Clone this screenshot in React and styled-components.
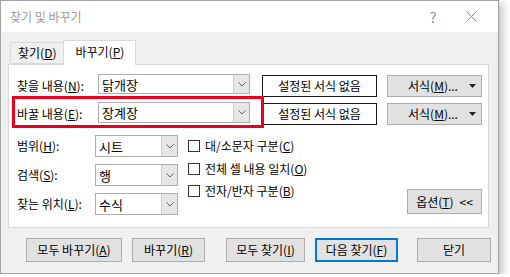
import React from "react";
import styled, { createGlobalStyle } from "styled-components";

const Global = createGlobalStyle`
  html, body { margin: 0; padding: 0; background: #ffffff; }
  body { font-family: "Noto Sans CJK KR", "Noto Sans", sans-serif; font-size: 12px; color: #000; }
  * { box-sizing: border-box; }
  u { text-decoration: underline; text-underline-offset: 1px; }
`;

const Window = styled.div`
  width: 499px;
  height: 274px;
  border: 1px solid #a3a3a3;
  box-shadow: 3px 3px 9px rgba(0, 0, 0, 0.28);
  display: flex;
  flex-direction: column;
  background: #f0f0f0;
  position: relative;
`;

const TitleBar = styled.div`
  height: 31px;
  background: #ffffff;
  display: flex;
  align-items: center;
  padding-left: 9px;
  color: #9a9a9a;
  font-size: 12px;
`;

const Title = styled.div`
  flex: 1;
  line-height: 1;
  padding-top: 1px;
`;

const TitleIcon = styled.div`
  width: ${p => p.$w}px;
  display: flex;
  align-items: center;
  justify-content: center;
  color: #8c8c8c;
  font-size: 14px;
`;

const Body = styled.div`
  flex: 1;
  padding: 8px 9px 0 7px;
  display: flex;
  flex-direction: column;
`;

const TabStrip = styled.div`
  display: flex;
  align-items: flex-end;
  padding-left: 2px;
  height: 24px;
  position: relative;
  z-index: 1;
`;

const Tab = styled.div`
  height: ${p => (p.$active ? 25 : 22)}px;
  margin-bottom: ${p => (p.$active ? -1 : 0)}px;
  padding: 0 ${p => (p.$active ? 11 : 7)}px;
  display: flex;
  align-items: center;
  border: 1px solid #d9d9d9;
  border-bottom: ${p => (p.$active ? "none" : "1px solid #d9d9d9")};
  border-right: ${p => (p.$active ? "1px solid #d9d9d9" : "none")};
  background: ${p => (p.$active ? "#ffffff" : "#f0f0f0")};
  font-size: 12px;
  line-height: 1;
  padding-bottom: ${p => (p.$active ? 2 : 0)}px;
`;

const Panel = styled.div`
  width: 481px;
  height: 164px;
  background: #ffffff;
  border: 1px solid #d9d9d9;
  padding: 9px 0 0 8px;
  display: flex;
  flex-direction: column;
  position: relative;
`;

const TopRows = styled.div`
  display: flex;
  flex-direction: column;
  gap: 5px;
`;

const Row = styled.div`
  display: flex;
  align-items: center;
  height: 23px;
`;

const Label = styled.div`
  width: ${p => p.$w}px;
  flex: none;
  white-space: nowrap;
  font-size: 12px;
  line-height: 1;
`;

const ComboBox = styled.div`
  width: ${p => p.$w}px;
  height: ${p => p.$h}px;
  border: 1px solid #adadad;
  display: flex;
  align-items: stretch;
  background: #fff;
  flex: none;
  align-self: ${p => p.$self || "auto"};
`;

const ComboText = styled.div`
  flex: 1;
  display: flex;
  align-items: center;
  padding-left: 3px;
  font-size: 13px;
  line-height: 1;
`;

const ComboButton = styled.div`
  width: 16px;
  background: #e6e6e6;
  border-left: 1px solid #cfcfcf;
  display: flex;
  align-items: center;
  justify-content: center;
`;

const StatusBox = styled.div`
  width: 115px;
  height: 22px;
  margin-left: 12px;
  border: 1px solid #1a1a1a;
  display: flex;
  align-items: center;
  justify-content: center;
  font-size: 12px;
  line-height: 1;
  flex: none;
  align-self: flex-start;
  margin-top: 1px;
`;

const FormatButton = styled.div`
  width: 95px;
  height: 22px;
  margin-left: 10px;
  background: #e1e1e1;
  border: 1px solid #adadad;
  display: flex;
  align-items: center;
  padding-left: 20px;
  padding-right: 5px;
  font-size: 12px;
  line-height: 1;
  flex: none;
  align-self: flex-start;
  margin-top: 1px;
`;

const FormatText = styled.span`
  flex: 1;
`;

const Highlight = styled.div`
  position: absolute;
  left: 3px;
  top: 31px;
  width: 252px;
  height: 32px;
  border: 3px solid #e8001c;
  pointer-events: none;
`;

const Lower = styled.div`
  display: flex;
  margin-top: 10px;
`;

const LeftCol = styled.div`
  display: flex;
  flex-direction: column;
  gap: 7px;
`;

const LowRow = styled.div`
  display: flex;
  align-items: center;
  height: 22px;
`;

const CheckCol = styled.div`
  display: flex;
  flex-direction: column;
  margin-left: 10px;
`;

const CheckRow = styled.label`
  display: flex;
  align-items: center;
  height: 22.5px;
  gap: 5px;
  font-size: 12px;
  line-height: 1;
`;

const Box = styled.span`
  width: 12px;
  height: 12px;
  border: 1px solid #333333;
  background: #fff;
  flex: none;
`;

const OptionsButton = styled.div`
  margin-left: auto;
  margin-right: 6px;
  align-self: flex-end;
  margin-bottom: 1px;
  width: 75px;
  height: 25px;
  background: #e1e1e1;
  border: 1px solid #adadad;
  display: flex;
  align-items: center;
  justify-content: center;
  gap: 6px;
  font-size: 12px;
  line-height: 1;
`;

const ButtonBar = styled.div`
  display: flex;
  margin-top: 10px;
  padding-left: 18px;
`;

const Button = styled.div`
  width: ${p => p.$w}px;
  height: 24px;
  margin-left: ${p => p.$ml || 0}px;
  background: #e1e1e1;
  border: ${p => (p.$default ? "2px solid #0078d7" : "1px solid #adadad")};
  display: flex;
  align-items: center;
  justify-content: center;
  font-size: 12px;
  line-height: 1;
  flex: none;
`;

const Chevron = () => (
  <svg width="8" height="5" viewBox="0 0 8 5">
    <path d="M0.5 0.5 L4 4 L7.5 0.5" fill="none" stroke="#606060" strokeWidth="1" />
  </svg>
);

const Caret = () => (
  <svg width="7" height="4" viewBox="0 0 7 4">
    <path d="M0 0 H7 L3.5 4 Z" fill="#202020" />
  </svg>
);

const Combo = ({ w, h, value, self }) => (
  <ComboBox $w={w} $h={h} $self={self}>
    <ComboText>{value}</ComboText>
    <ComboButton>
      <Chevron />
    </ComboButton>
  </ComboBox>
);

const FormatRow = ({ label, mnemonic, value, comboH }) => (
  <Row>
    <Label $w={81}>
      {label}(<u>{mnemonic}</u>):
    </Label>
    <Combo w={152} h={comboH} value={value} self="flex-start" />
    <StatusBox>설정된 서식 없음</StatusBox>
    <FormatButton>
      <FormatText>
        서식(<u>M</u>)...
      </FormatText>
      <Caret />
    </FormatButton>
  </Row>
);

const Check = ({ text, mnemonic }) => (
  <CheckRow>
    <Box />
    <span>
      {text}(<u>{mnemonic}</u>)
    </span>
  </CheckRow>
);

const SearchRow = ({ label, mnemonic, value }) => (
  <LowRow>
    <Label $w={78}>
      {label}(<u>{mnemonic}</u>):
    </Label>
    <Combo w={83} h={22} value={value} />
  </LowRow>
);

export default function App() {
  return (
    <>
      <Global />
      <Window>
        <TitleBar>
          <Title>찾기 및 바꾸기</Title>
          <TitleIcon $w={30}>?</TitleIcon>
          <TitleIcon $w={46}>
            <svg width="11" height="11" viewBox="0 0 11 11">
              <path d="M0.5 0.5 L10.5 10.5 M10.5 0.5 L0.5 10.5" stroke="#8c8c8c" strokeWidth="1" />
            </svg>
          </TitleIcon>
          <TitleIcon $w={4} />
        </TitleBar>
        <Body>
          <TabStrip>
            <Tab>
              <span>
                찾기(<u>D</u>)
              </span>
            </Tab>
            <Tab $active>
              <span>
                바꾸기(<u>P</u>)
              </span>
            </Tab>
          </TabStrip>
          <Panel>
            <TopRows>
              <FormatRow label="찾을 내용" mnemonic="N" value="닭개장" comboH={20} />
              <FormatRow label="바꿀 내용" mnemonic="E" value="장계장" comboH={21} />
            </TopRows>
            <Highlight />
            <Lower>
              <LeftCol>
                <SearchRow label="범위" mnemonic="H" value="시트" />
                <SearchRow label="검색" mnemonic="S" value="행" />
                <SearchRow label="찾는 위치" mnemonic="L" value="수식" />
              </LeftCol>
              <CheckCol>
                <Check text="대/소문자 구분" mnemonic="C" />
                <Check text="전체 셀 내용 일치" mnemonic="O" />
                <Check text="전자/반자 구분" mnemonic="B" />
              </CheckCol>
              <OptionsButton>
                <span>
                  옵션(<u>T</u>)
                </span>
                <span>&lt;&lt;</span>
              </OptionsButton>
            </Lower>
          </Panel>
          <ButtonBar>
            <Button $w={96}>
              <span>
                모두 바꾸기(<u>A</u>)
              </span>
            </Button>
            <Button $w={73} $ml={10}>
              <span>
                바꾸기(<u>R</u>)
              </span>
            </Button>
            <Button $w={79} $ml={21}>
              <span>
                모두 찾기(<u>I</u>)
              </span>
            </Button>
            <Button $w={83} $ml={10} $default>
              <span>
                다음 찾기(<u>F</u>)
              </span>
            </Button>
            <Button $w={74} $ml={19}>
              닫기
            </Button>
          </ButtonBar>
        </Body>
      </Window>
    </>
  );
}
